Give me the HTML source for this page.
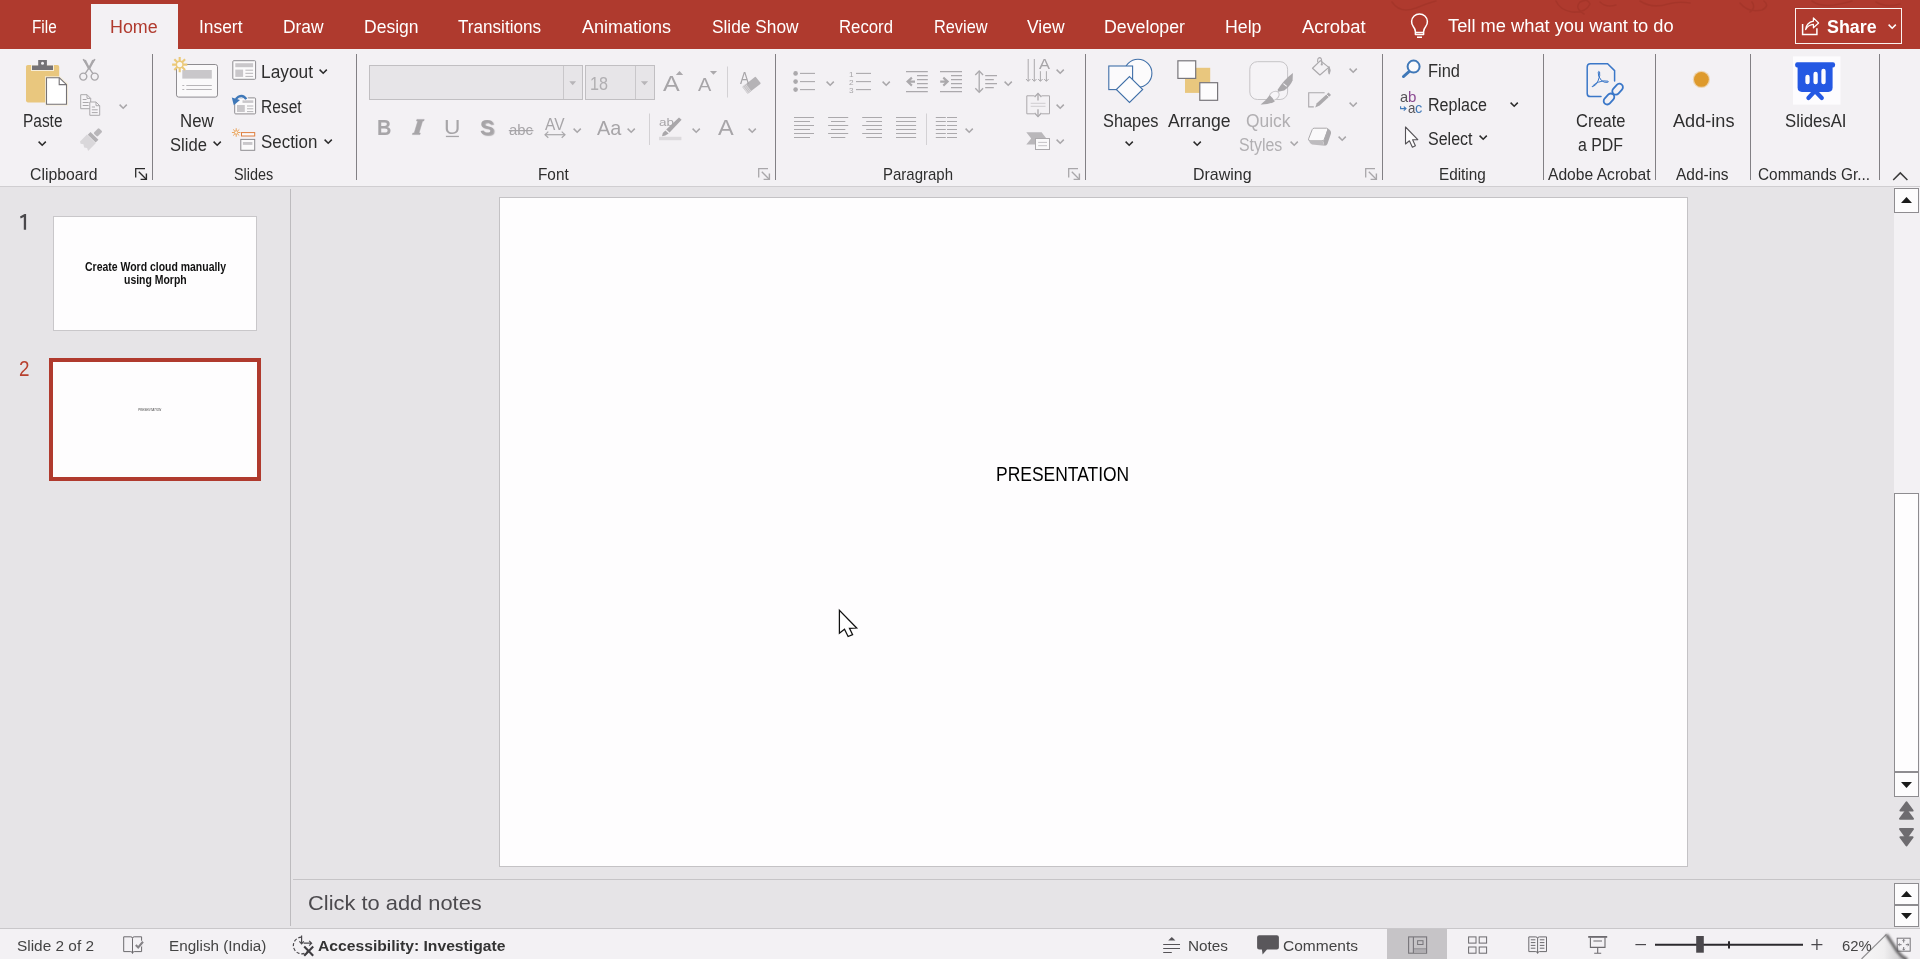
<!DOCTYPE html>
<html lang="en"><head><meta charset="utf-8"><title>PowerPoint</title>
<style>
html,body{margin:0;padding:0;width:1920px;height:959px;overflow:hidden;background:#E6E4E7;font-family:"Liberation Sans",sans-serif;}
.a{position:absolute}
.t{position:absolute;white-space:nowrap;line-height:1;transform-origin:0 0;display:inline-block}
svg{position:absolute;overflow:visible}
.sep{position:absolute;width:1px;background:#828084;top:54px;height:126px}

</style></head>
<body>
<!-- base.html -->
<!-- title/tab bar -->
<div class="a" style="left:0;top:0;width:1920px;height:49px;background:#AF3A2E"></div>
<!-- faint office background doodle -->
<svg style="left:1380px;top:0" width="540" height="20" viewBox="1380 0 540 20" fill="none" stroke="#9C3226" stroke-width="1.6" stroke-linecap="round" opacity=".5">
<path d="M1392 2 Q1400 14 1416 8 Q1428 3 1436 1"/>
<path d="M1556 1 Q1560 10 1572 12 Q1586 13 1590 4 Q1588 -2 1580 2 Q1574 8 1584 14"/>
<path d="M1600 2 Q1606 8 1616 5 M1640 1 Q1652 9 1668 4 Q1678 1 1690 3"/>
<path d="M1740 3 Q1748 13 1762 10 Q1770 6 1764 1 M1752 2 Q1756 8 1750 12"/>
<path d="M1812 1 Q1820 7 1834 5 Q1846 3 1852 1 M1876 2 Q1886 8 1900 4"/>
</svg>
<!-- ribbon body -->
<div class="a" style="left:0;top:49px;width:1920px;height:137px;background:#F3F1F4"></div>
<div class="a" style="left:0;top:186px;width:1920px;height:1px;background:#D0CED1"></div>
<!-- home tab -->
<div class="a" style="left:91px;top:4px;width:87px;height:46px;background:#F3F1F4"></div>
<!-- share button -->
<div class="a" style="left:1795px;top:8px;width:105px;height:34px;border:1px solid #FBF3F1"></div>
<!-- group separators -->
<div class="sep" style="left:152px"></div>
<div class="sep" style="left:356px"></div>
<div class="sep" style="left:775px"></div>
<div class="sep" style="left:1085px"></div>
<div class="sep" style="left:1382px"></div>
<div class="sep" style="left:1543px"></div>
<div class="sep" style="left:1655px"></div>
<div class="sep" style="left:1750px"></div>
<div class="sep" style="left:1879px"></div>

<!-- ribbon1.html -->
<svg style="left:0;top:0" width="360" height="190" viewBox="0 0 360 190" fill="none">
<!-- PASTE icon -->
<rect x="26" y="65" width="33.2" height="37.4" rx="1.8" fill="#E9C77E"/>
<rect x="31" y="65" width="23" height="6" fill="#F6EDD9"/>
<path d="M38.2 60 H46.9 V65.4 H53 V69.9 H32 V65.4 H38.2 Z" fill="#747276"/>
<circle cx="42.5" cy="63.2" r="1.5" fill="#F3F1F4"/>
<path d="M45 76.2 H60 L68 83.5 V105.7 H45 Z" fill="#F6EDD9" opacity=".9"/>
<path d="M46.5 77.7 H59.2 L66.5 84.6 V104.2 H46.5 Z" fill="#FFFFFF" stroke="#747276" stroke-width="1.1" stroke-linejoin="round"/>
<path d="M59.2 77.7 V84.6 H66.5" stroke="#747276" stroke-width="1.1"/>
<!-- CUT (disabled) -->
<g stroke="#A9A7AA" stroke-width="1.4" stroke-linecap="round">
<path d="M83.4 59.6 L92.6 73.2"/>
<path d="M94.7 59.6 L85.5 73.2"/>
<circle cx="83.3" cy="76.6" r="3.5"/>
<circle cx="94.7" cy="76.6" r="3.5"/>
</g>
<path d="M83 59.3 L86 60 L90.2 68.5 L88.2 69.5 Z" fill="#A9A7AA"/>
<path d="M95.1 59.3 L92.1 60 L87.9 68.5 L89.9 69.5 Z" fill="#A9A7AA"/>
<!-- COPY (disabled) -->
<g stroke="#ABA9AC" stroke-width="1">
<path d="M80.7 94.7 H87 L90.7 98.4 V108.7 H80.7 Z" fill="#F6F4F7"/>
<path d="M87 94.7 V98.4 H90.7"/>
<path d="M82.7 99.5 H86.5 M82.7 102.5 H88.7 M82.7 105.5 H88.7"/>
<path d="M89.8 102 H96 L99.7 105.7 V115.3 H89.8 Z" fill="#F6F4F7"/>
<path d="M96 102 V105.7 H99.7"/>
<path d="M91.8 107 H95 M91.8 109.8 H97.7 M91.8 112.6 H97.7"/>
</g>
<!-- FORMAT PAINTER (disabled) -->
<g transform="translate(90.5 139.8) rotate(45)">
<rect x="-2.7" y="-14.2" width="5.4" height="7.4" rx="1.2" fill="#B9B7BA"/>
<rect x="-5.6" y="-5.6" width="11.2" height="3.9" fill="#B3B1B4"/>
<path d="M-6.2 -1.2 H6.2 V9.6 L3.4 8.2 L0.9 9.9 L-1.8 8.2 L-4.2 9.8 L-6.2 8.6 Z" fill="#D9D7DA"/>
</g>
<!-- NEW SLIDE icon -->
<rect x="176.5" y="64.5" width="41" height="32.6" rx="2.2" fill="#FAF9FA" stroke="#8E8C90" stroke-width="1"/>
<rect x="182.3" y="70" width="29.5" height="8.6" fill="#C9C7CA"/>
<path d="M186.3 85.5 H211.8 M186.3 89.5 H211.8" stroke="#B7B5B8" stroke-width="1"/>
<path d="M182.3 85.5 H184.3 M182.3 89.5 H184.3" stroke="#B7B5B8" stroke-width="1"/>
<g stroke="#EBC978" stroke-width="2.1" stroke-linecap="butt">
<path d="M179.7 57 V72.2 M172.1 64.6 H187.3 M174.3 59.2 L185.1 70 M185.1 59.2 L174.3 70"/>
</g>
<circle cx="179.7" cy="64.6" r="3.3" fill="#FBF8F0" stroke="#EBC978" stroke-width="1.4"/>
<!-- LAYOUT icon -->
<rect x="232.8" y="60.7" width="22.8" height="18.6" rx="1" fill="#FBFAFB" stroke="#8E8C90" stroke-width="1"/>
<rect x="235.3" y="63.2" width="17.8" height="4" fill="#C9C7CA"/>
<rect x="235.3" y="69.6" width="7.8" height="7.3" fill="#C9C7CA"/>
<path d="M245.4 70.2 H253.1 M245.4 73.3 H253.1 M245.4 76.4 H253.1" stroke="#B7B5B8" stroke-width="1"/>
<!-- RESET icon -->
<rect x="234.7" y="97.9" width="20.9" height="16" rx="1" fill="#FBFAFB" stroke="#8E8C90" stroke-width="1"/>
<rect x="242.5" y="100.3" width="10.8" height="2.6" fill="#C9C7CA"/>
<rect x="237" y="105" width="7.8" height="7" fill="#C9C7CA"/>
<path d="M247 106 H253.3 M247 108.8 H253.3 M247 111.6 H253.3" stroke="#B7B5B8" stroke-width="1"/>
<path d="M246.5 99.5 Q243.5 94.2 238.2 96.6 Q235.6 98 235.2 101" stroke="#F3F1F4" stroke-width="4.5"/>
<path d="M246.3 99.2 Q243.3 94.4 238.4 96.8 Q236 98.2 235.6 100.6" stroke="#3F78B8" stroke-width="2.3"/>
<path d="M231.8 97.6 L240 100 L233.8 105.2 Z" fill="#3F78B8"/>
<!-- SECTION icon -->
<g stroke="#E9A55F" stroke-width="1" stroke-linecap="round">
<path d="M236.2 128.6 V136.4 M232.3 132.5 H240.1 M233.4 129.7 L239 135.3 M239 129.7 L233.4 135.3"/>
</g>
<circle cx="236.2" cy="132.5" r="1.7" fill="#FBF6EC" stroke="#E9A55F" stroke-width=".9"/>
<rect x="241.5" y="132.6" width="13.2" height="3.4" fill="#FBFAFB" stroke="#DE7F3E" stroke-width="1"/>
<rect x="240.8" y="139.4" width="13.9" height="10.9" fill="#FBFAFB" stroke="#8E8C90" stroke-width="1"/>
<rect x="242.9" y="142" width="9.5" height="2.9" fill="#C9C7CA"/>
</svg>

<!-- ribbon2.html -->
<svg style="left:360px;top:50px" width="420" height="140" viewBox="360 50 420 140" fill="none">
<!-- font name box -->
<rect x="369.5" y="65.5" width="213" height="34" fill="#E7E5E8" stroke="#C1BFC2" stroke-width="1"/>
<path d="M563.5 66 V99" stroke="#C9C7CA" stroke-width="1"/>
<path d="M569.3 81.2 H576.1 L572.7 85.2 Z" fill="#B7B5B8"/>
<!-- font size box -->
<rect x="585.5" y="65.5" width="69" height="34" fill="#E7E5E8" stroke="#C1BFC2" stroke-width="1"/>
<path d="M635.5 66 V99" stroke="#C9C7CA" stroke-width="1"/>
<path d="M640.9 81.2 H648.1 L644.5 85.2 Z" fill="#B7B5B8"/>
<!-- grow / shrink markers -->
<path d="M675.8 75 L679.5 71 L683.2 75 Z" fill="#ABA9AC"/>
<path d="M709.9 71 H717.1 L713.5 74.8 Z" fill="#ABA9AC"/>
<!-- thin separators -->
<path d="M727.5 66.5 V97.5" stroke="#D3D1D4" stroke-width="1"/>
<path d="M649.5 113.5 V145" stroke="#D3D1D4" stroke-width="1"/>
<!-- clear formatting eraser -->
<g transform="translate(751.6 85.2) rotate(-38)">
<rect x="-8.4" y="-4.4" width="16.8" height="8.8" rx=".8" fill="#B5B3B6"/>
<rect x="-8.4" y="-4.4" width="4.6" height="8.8" fill="#D9D7DA"/>
<path d="M-6.6 -4.4 V4.4 M-5 -4.4 V4.4" stroke="#B5B3B6" stroke-width=".6"/>
</g>
<!-- italic I -->
<path d="M419.2 119.4 H424.2 L423.8 121 H422.6 L419 133 H420.3 L419.9 134.6 H412.4 L412.8 133 H414.2 L417.8 121 H416.5 L416.9 119.4 Z" fill="#A7A5A8" stroke="#A7A5A8" stroke-width=".5"/>
<!-- underline of U -->
<rect x="445.9" y="135.8" width="13" height="1.3" fill="#A7A5A8"/>
<!-- strike of abc -->
<rect x="508.8" y="130" width="24.6" height="1.2" fill="#A7A5A8"/>
<!-- AV spacing arrow -->
<path d="M545.3 134.7 H564.7" stroke="#A9A7AA" stroke-width="1.2"/>
<path d="M548.3 131.6 L545 134.7 L548.3 137.8 M561.7 131.6 L565 134.7 L561.7 137.8" stroke="#A9A7AA" stroke-width="1.2"/>
<!-- highlighter pen -->
<path d="M679 117.6 L681.6 119.8 L669.6 132.4 L666.2 129.6 Z" fill="#A9A7AA"/>
<path d="M665.4 130.6 L668.7 133.4 L665.3 135.6 L662 136.2 L662.8 133 Z" fill="#A9A7AA"/>
<rect x="659" y="136.8" width="22.4" height="3.4" fill="#DCDADD"/>
</svg>

<!-- ribbon3.html -->
<svg style="left:780px;top:50px" width="310" height="140" viewBox="780 50 310 140" fill="none">
<circle cx="795.6" cy="73.4" r="2.3" fill="#ABA9AC"/>
<path d="M800 73.4 H815" stroke="#ABA9AC" stroke-width="1.1"/>
<circle cx="795.6" cy="81.6" r="2.3" fill="#ABA9AC"/>
<path d="M800 81.6 H815" stroke="#ABA9AC" stroke-width="1.1"/>
<circle cx="795.6" cy="89.6" r="2.3" fill="#ABA9AC"/>
<path d="M800 89.6 H815" stroke="#ABA9AC" stroke-width="1.1"/>
<path d="M856 73.4 H871" stroke="#ABA9AC" stroke-width="1.1"/>
<path d="M856 81.6 H871" stroke="#ABA9AC" stroke-width="1.1"/>
<path d="M856 89.6 H871" stroke="#ABA9AC" stroke-width="1.1"/>
<path d="M906 71.6 H927.8 M906 91.6 H927.8 M917 75.6 H927.8 M917 79.6 H927.8 M917 83.6 H927.8 M917 87.6 H927.8" stroke="#ABA9AC" stroke-width="1.1"/>
<path d="M906 81.6 L911.2 76.8 L912.6 78.4 L910.4 80.5 H915 V82.7 H910.4 L912.6 84.8 L911.2 86.4 Z" fill="#ABA9AC"/>
<path d="M940 71.6 H962 M940 91.6 H962 M951 75.6 H962 M951 79.6 H962 M951 83.6 H962 M951 87.6 H962" stroke="#ABA9AC" stroke-width="1.1"/>
<path d="M949.2 81.6 L944 76.8 L942.6 78.4 L944.8 80.5 H940.2 V82.7 H944.8 L942.6 84.8 L944 86.4 Z" fill="#ABA9AC"/>
<path d="M979.2 71.5 V91.8" stroke="#ABA9AC" stroke-width="1.3"/>
<path d="M975.3 75 L979.2 71 L983.1 75 M975.3 88.3 L979.2 92.3 L983.1 88.3" stroke="#ABA9AC" stroke-width="1.3"/>
<path d="M985.2 75.6 H997 M985.2 79.6 H993.8 M985.2 83.6 H997 M985.2 87.6 H993.8" stroke="#ABA9AC" stroke-width="1.1"/>
<path d="M794 117.5 H814 M794 121.5 H810 M794 125.5 H814 M794 129.5 H810 M794 133.5 H814 M794 137.5 H810" stroke="#ABA9AC" stroke-width="1.1"/>
<path d="M828.1 117.5 H848.2 M831 121.5 H845.3 M828.1 125.5 H848.2 M831 129.5 H845.3 M828.1 133.5 H848.2 M831 137.5 H845.3" stroke="#ABA9AC" stroke-width="1.1"/>
<path d="M862.2 117.5 H882 M866.2 121.5 H882 M862.2 125.5 H882 M866.2 129.5 H882 M862.2 133.5 H882 M866.2 137.5 H882" stroke="#ABA9AC" stroke-width="1.1"/>
<path d="M896 117.5 H916.1 M896 121.5 H916.1 M896 125.5 H916.1 M896 129.5 H916.1 M896 133.5 H916.1 M896 137.5 H916.1" stroke="#ABA9AC" stroke-width="1.1"/>
<path d="M935.8 117.5 H945.8 M935.8 121.5 H945.8 M935.8 125.5 H945.8 M935.8 129.5 H945.8 M935.8 133.5 H945.8 M935.8 137.5 H945.8" stroke="#ABA9AC" stroke-width="1.1"/>
<path d="M947 117.5 H957 M947 121.5 H957 M947 125.5 H957 M947 129.5 H957 M947 133.5 H957 M947 137.5 H957" stroke="#ABA9AC" stroke-width="1.1"/>
<path d="M926.5 113.5 V145" stroke="#D3D1D4" stroke-width="1"/>
<path d="M1028.2 59 V81 M1034.3 59 V81 M1040.4 71.2 V81 M1046.4 71.2 V81" stroke="#ABA9AC" stroke-width="1"/>
<path d="M1026.0 79 L1028.2 81.4 L1030.4 79" stroke="#ABA9AC" stroke-width="1"/>
<path d="M1032.1 79 L1034.3 81.4 L1036.5 79" stroke="#ABA9AC" stroke-width="1"/>
<path d="M1038.2 79 L1040.4 81.4 L1042.6000000000001 79" stroke="#ABA9AC" stroke-width="1"/>
<path d="M1044.2 79 L1046.4 81.4 L1048.6000000000001 79" stroke="#ABA9AC" stroke-width="1"/>
<path d="M1034.5 95.8 H1026.8 V113.8 H1034.5 M1041.5 95.8 H1049.5 V113.8 H1041.5" stroke="#ABA9AC" stroke-width="1"/>
<path d="M1038 93.4 V100.4 M1038 109.2 V116.6" stroke="#ABA9AC" stroke-width="1.3"/>
<path d="M1034.6 97 L1038 93.4 L1041.4 97 M1034.6 113 L1038 116.6 L1041.4 113" stroke="#ABA9AC" stroke-width="1.3"/>
<path d="M1030.7 103.3 H1045.5 M1030.7 106.3 H1045.5" stroke="#CFCDD0" stroke-width="1"/>
<path d="M1026.3 132.2 H1041.6 L1046.4 138.4 L1041.6 144.6 H1026.3 L1031.2 138.4 Z" fill="#B9B7BA"/>
<rect x="1035.5" y="138.5" width="14" height="11" fill="#FAF9FA" stroke="#ABA9AC" stroke-width="1"/>
<path d="M1038.2 142.4 H1047 M1038.2 145.7 H1047" stroke="#C4C2C5" stroke-width="1"/>
</svg>

<!-- ribbon4.html -->
<svg style="left:1090px;top:0" width="830" height="190" viewBox="1090 0 830 190" fill="none">
<!-- SHAPES icon -->
<circle cx="1138" cy="73.2" r="13.9" fill="#FCFBFC" stroke="#3F6FA8" stroke-width="1.1"/>
<rect x="1108.8" y="66" width="23.8" height="23.6" fill="#FBFAFC" stroke="#3F6FA8" stroke-width="1.1"/>
<path d="M1129.5 76.6 L1142.7 89.5 L1129.5 102.5 L1116.3 89.5 Z" fill="#FDFCFD" stroke="#3F6FA8" stroke-width="1.1"/>
<!-- ARRANGE icon -->
<rect x="1185" y="67.8" width="25.2" height="25.1" fill="#E9C77E"/>
<rect x="1177.9" y="60.8" width="17.8" height="17.6" fill="#FDFCFD" stroke="#78767A" stroke-width="1.2"/>
<rect x="1199.8" y="82.7" width="17.8" height="17.6" fill="#FDFCFD" stroke="#78767A" stroke-width="1.2"/>
<!-- QUICK STYLES icon (disabled) -->
<rect x="1249.8" y="61.7" width="37.8" height="37.8" rx="7.5" fill="#F5F3F6" stroke="#C6C4C7" stroke-width="1"/>
<path d="M1292.9 72.9 L1292.6 80.5 Q1290 86.5 1284.2 90.6 L1278.2 91.8 L1277.6 89.8 Q1283.5 80 1292.9 72.9 Z" fill="#ABA9AC"/>
<path d="M1283.4 83.6 L1286.8 86.4" stroke="#F5F3F6" stroke-width="1.1"/>
<ellipse cx="1274.2" cy="95.8" rx="5.4" ry="4" transform="rotate(-38 1274.2 95.8)" fill="#F7F5F8" stroke="#C9C7CA" stroke-width="1"/>
<path d="M1269.6 95.2 Q1273.4 98.2 1274.8 101.4 Q1268.8 104.8 1260.6 104.5 Q1266 100.6 1269.6 95.2 Z" fill="#ABA9AC"/>
<!-- SHAPE FILL (disabled) -->
<path d="M1320.4 60.6 L1328.8 67.4 L1319.9 75 L1312.5 68.3 Z" stroke="#ABA9AC" stroke-width="1.2" stroke-linejoin="round"/>
<path d="M1317.7 62.4 Q1317.2 57.6 1319.8 57.6 Q1322 57.8 1321.8 64" stroke="#ABA9AC" stroke-width="1.1"/>
<circle cx="1321.8" cy="64.4" r="1.1" fill="#ABA9AC"/>
<path d="M1329 66.4 Q1331.4 70.6 1329.2 74.2 Q1327.4 71.4 1329 66.4 Z" fill="#ABA9AC" stroke="#ABA9AC" stroke-width=".8"/>
<!-- SHAPE OUTLINE (disabled) -->
<path d="M1324.6 92.8 H1308.7 V106.9 H1313.8" stroke="#ABA9AC" stroke-width="1.1"/>
<path d="M1328.6 92.6 L1331 95 L1319.6 105.6 L1315.2 107.4 L1316.8 103.2 Z" fill="#ABA9AC"/>
<path d="M1326.2 94.2 L1328.8 96.8" stroke="#F3F1F4" stroke-width=".9"/>
<!-- SHAPE EFFECTS (disabled) -->
<path d="M1314.2 128.2 H1326.6 Q1328.4 128.4 1327.8 130 L1324.2 139.4 Q1323.6 140.8 1322 140.8 H1310 Q1308 140.6 1308.6 138.8 L1312.2 129.6 Q1312.8 128.2 1314.2 128.2 Z" fill="#FAF9FA" stroke="#ABA9AC" stroke-width="1"/>
<path d="M1327.6 128.6 Q1331.6 130.4 1331 133.6 L1327.4 144 Q1326.6 146 1324.4 145.8 L1323 140.8 Q1324 140.2 1324.4 139.2 Z" fill="#ABA9AC"/>
<path d="M1308.6 140 Q1309.6 143.6 1312 144.4 L1324.4 145.8 L1322.6 141 H1310.2 Z" fill="#BDBBBE"/>
<!-- FIND -->
<circle cx="1413.6" cy="66.6" r="6" fill="#FAFAFC" stroke="#3F78B8" stroke-width="2"/>
<path d="M1409 71.6 L1403.4 76.6" stroke="#3F78B8" stroke-width="2.8" stroke-linecap="round"/>
<!-- REPLACE arrow -->
<path d="M1400.6 106.2 V108.6 H1405.6" stroke="#3F78B8" stroke-width="1.1"/>
<path d="M1403.8 106.6 L1406 108.6 L1403.8 110.6" stroke="#3F78B8" stroke-width="1.1"/>
<!-- SELECT cursor -->
<path d="M1405.5 127 V144 L1409.4 140.8 L1412.4 147.2 L1415.4 145.8 L1412.6 139.8 L1417.8 139.6 Z" fill="#FDFCFD" stroke="#555357" stroke-width="1.1" stroke-linejoin="round"/>
<!-- CREATE PDF -->
<path d="M1601 96.6 H1590.4 Q1587.2 96.6 1587.2 93.4 V67 Q1587.2 63.8 1590.4 63.8 H1607.6 L1614.6 70.6 V81" stroke="#3A77C8" stroke-width="1.5" stroke-linecap="round"/>
<path d="M1592.2 86.8 Q1595.6 86.4 1598 81 Q1600.6 75 1599.6 72 Q1598.8 70.6 1598.2 72 Q1597.6 76 1601.2 80.2 Q1604 83 1607.6 82.4 Q1609 82 1608 81.2 Q1603.6 80 1598.4 82.2 Q1594.4 84 1592.6 86 Q1592 87 1592.2 86.8 Z" stroke="#3A77C8" stroke-width="1"/>
<g stroke="#3A77C8" stroke-width="1.8">
<rect x="-6.2" y="-3.5" width="12.4" height="7" rx="3.5" transform="translate(1617.6 89.2) rotate(-48)"/>
<rect x="-6.2" y="-3.5" width="12.4" height="7" rx="3.5" transform="translate(1609 99) rotate(-48)"/>
</g>
<!-- ADD-INS dot -->
<circle cx="1701.4" cy="79.4" r="8.6" fill="#E7B25A" opacity=".45"/>
<circle cx="1701.4" cy="79.4" r="7.4" fill="#DE9A2C"/>
<!-- SLIDES AI -->
<rect x="1793" y="56.4" width="47.5" height="48.2" fill="#FDFCFE"/>
<rect x="1795.2" y="62.2" width="39.8" height="5.2" rx="2" fill="#2458E3"/>
<path d="M1797.6 66 H1832.6 V87.6 Q1832.6 91.9 1828.3 91.9 H1801.9 Q1797.6 91.9 1797.6 87.6 Z" fill="#2458E3"/>
<path d="M1814.9 91 L1808.4 98 M1815.1 91 L1821.8 98" stroke="#2458E3" stroke-width="4.2" stroke-linecap="round"/>
<g stroke="#FDFCFE" stroke-width="4.3" stroke-linecap="round">
<path d="M1807.5 77 V82.2 M1815.6 74 V82.2 M1823.5 71 V82.2"/>
</g>
<!-- collapse ribbon chevron -->
<path d="M1893.2 180 L1900.3 172.9 L1907.4 180" stroke="#3A3A3A" stroke-width="1.5"/>
<!-- lightbulb -->
<path d="M1415.4 34.6 V31.6 Q1415.2 29 1413.4 26.8 A7.9 7.9 0 1 1 1425.6 26.8 Q1423.8 29 1423.6 31.6 V34.6 Z" stroke="#FFFFFF" stroke-width="1.5" stroke-linejoin="round"/>
<path d="M1415.6 32.5 H1423.4 M1417 37.2 H1422" stroke="#FFFFFF" stroke-width="1.5"/>
<!-- share icon -->
<path d="M1802.6 24 V34.4 H1816.9 V28.2" stroke="#FFFFFF" stroke-width="1.5"/>
<path d="M1805.6 29.6 Q1806.4 22.6 1813.4 21.2 V17.8 L1818.6 23 L1813.4 27.8 V24.4 Q1808.4 24.6 1805.6 29.6 Z" stroke="#FFFFFF" stroke-width="1.2" stroke-linejoin="round"/>
</svg>

<!-- panels.html -->
<!-- thumbnail pane divider -->
<div class="a" style="left:290px;top:189px;width:1px;height:737px;background:#BDBBBE"></div>
<!-- thumb number 1 -->
<svg style="left:18px;top:212px" width="12" height="20" viewBox="18 212 12 20"><path d="M26.1 214 V229.8 H23.8 V216.9 L20.7 218.4 L20 216.5 L24.5 214 Z" fill="#4A484C"/></svg>
<!-- thumb 1 -->
<div class="a" style="left:53px;top:216px;width:202px;height:113px;background:#FEFDFE;border:1px solid #C9C7CA"></div>
<!-- thumb 2 (selected) -->
<div class="a" style="left:49px;top:358px;width:204px;height:115px;background:#FEFDFE;border:4px solid #B03A2E"></div>
<span class="t" style="left:138px;top:407.6px;font-size:10px;color:#4a4a4a;font-style:italic;transform:scale(0.305,0.36)">PRESENTATION</span>
<!-- slide -->
<div class="a" style="left:499px;top:197px;width:1187px;height:668px;background:#FEFDFE;border:1px solid #C4C2C5"></div>
<!-- notes divider -->
<div class="a" style="left:293px;top:879px;width:1627px;height:1px;background:#C6C4C7"></div>
<!-- vertical scrollbar -->
<div class="a" style="left:1894px;top:187px;width:26px;height:610px;background:#F3F1F4"></div>
<div class="a" style="left:1894px;top:188px;width:23px;height:23px;background:#FDFCFD;border:1px solid #8E8C90"></div>
<svg style="left:1901px;top:197px" width="11" height="6"><path d="M0 6 L5.5 0 L11 6Z" fill="#1a1a1a"/></svg>
<div class="a" style="left:1894px;top:493px;width:23px;height:277px;background:#FEFDFE;border:1px solid #8E8C90"></div>
<div class="a" style="left:1894px;top:772px;width:23px;height:23px;background:#FDFCFD;border:1px solid #8E8C90"></div>
<svg style="left:1901px;top:782px" width="11" height="6"><path d="M0 0 L11 0 L5.5 6Z" fill="#1a1a1a"/></svg>
<!-- prev / next slide -->
<svg style="left:1896px;top:798px" width="22" height="52" viewBox="1896 798 22 52">
<g fill="#6E6C70" stroke="#6E6C70" stroke-width="2" stroke-linejoin="round">
<path d="M1906.5 802.4 L1912.6 810.6 H1900.4 Z"/><path d="M1906.5 810 L1913 818.8 H1900 Z"/>
<path d="M1906.5 845.4 L1912.6 837.2 H1900.4 Z"/><path d="M1906.5 837.8 L1913 829 H1900 Z"/>
</g></svg>
<!-- notes scroll buttons -->
<div class="a" style="left:1894px;top:883px;width:23px;height:20px;background:#FDFCFD;border:1px solid #8E8C90"></div>
<svg style="left:1901px;top:891px" width="11" height="6"><path d="M0 6 L5.5 0 L11 6Z" fill="#1a1a1a"/></svg>
<div class="a" style="left:1894px;top:905px;width:23px;height:20px;background:#FDFCFD;border:1px solid #8E8C90"></div>
<svg style="left:1901px;top:913px" width="11" height="6"><path d="M0 0 L11 0 L5.5 6Z" fill="#1a1a1a"/></svg>
<!-- mouse cursor -->
<svg style="left:830px;top:600px" width="40" height="45" viewBox="830 600 40 45" fill="none"><path d="M839.4 610.3 V633.3 L844.5 629.2 L848.1 636.5 L852.6 634.6 L849.5 628.4 L856.7 628 Z" fill="#FFFFFF" stroke="#111111" stroke-width="1.25" stroke-linejoin="miter"/></svg>

<!-- status.html -->
<!-- status bar -->
<div class="a" style="left:0;top:928px;width:1920px;height:1px;background:#C9C7CA"></div>
<div class="a" style="left:0;top:929px;width:1920px;height:30px;background:#F3F1F4"></div>
<!-- normal view highlighted -->
<div class="a" style="left:1387px;top:929px;width:60px;height:30px;background:#C6C4C7"></div>
<svg style="left:0;top:925px" width="1920" height="34" viewBox="0 925 1920 34" fill="none">
<defs>
<linearGradient id="curl" x1="0" y1="0" x2="1" y2="0">
<stop offset="0" stop-color="#F6F5F6"/><stop offset=".5" stop-color="#F0EFF0"/><stop offset=".8" stop-color="#D6D5D7"/><stop offset="1" stop-color="#A9A8AA"/>
</linearGradient>
<filter id="bl" x="-20%" y="-20%" width="140%" height="140%"><feGaussianBlur stdDeviation=".9"/></filter>
</defs>
<!-- spell check book -->
<path d="M132.5 938.4 V953.4 M123.7 936.8 H130.8 Q132.5 936.8 132.5 938.4 Q132.5 936.8 134.2 936.8 H141.6 V951.6 H134.2 Q132.5 951.8 132.5 953.4 Q132.5 951.8 130.8 951.6 H123.7 Z" stroke="#6C6A6E" stroke-width="1"/>
<path d="M135.8 945 L138.2 947.4 L143 941.8" stroke="#F3F1F4" stroke-width="4"/>
<path d="M135.8 945 L138.2 947.4 L143 941.8" stroke="#858387" stroke-width="2.1"/>
<!-- accessibility -->
<path d="M301.4 937.2 A8.3 8.3 0 1 0 309 949.4" stroke="#4A484C" stroke-width="1.2" stroke-dasharray="3.2 1.8"/>
<path d="M301.6 935.4 V943.6 M299.4 941.4 L301.6 943.8 L303.8 941.4" stroke="#4A484C" stroke-width="1.2"/>
<path d="M303.6 943.2 H311.4 M309.2 940.8 L311.6 943.2 L309.2 945.6" stroke="#4A484C" stroke-width="1.2"/>
<path d="M304.2 946.6 L313.2 955.8 M313.2 946.6 L304.2 955.8" stroke="#3E3C40" stroke-width="2.1"/>
<!-- notes icon -->
<path d="M1168.2 940.6 L1171.8 936.9 L1175.4 940.6 Z" fill="#555357"/>
<path d="M1163.2 944.5 H1180 M1163.2 948.5 H1180 M1163.2 952.5 H1171.8" stroke="#555357" stroke-width="1.1"/>
<!-- comments icon -->
<path d="M1259.2 935.2 H1276.8 Q1278.9 935.2 1278.9 937.3 V947.5 Q1278.9 949.6 1276.8 949.6 H1267 L1262.6 954.4 L1261.9 949.6 H1259.2 Q1257.1 949.6 1257.1 947.5 V937.3 Q1257.1 935.2 1259.2 935.2 Z" fill="#59575B"/>
<!-- normal view -->
<rect x="1408.6" y="936.9" width="18" height="16.3" stroke="#77757A" stroke-width="1.1"/>
<path d="M1413.4 937 V953 M1413.4 949 H1426.6" stroke="#77757A" stroke-width="1.1"/>
<rect x="1414" y="949.5" width="12" height="3.2" fill="#AFADB1"/>
<rect x="1417.6" y="940.7" width="5.4" height="3.8" stroke="#77757A" stroke-width="1"/>
<!-- slide sorter -->
<g stroke="#6C6A6E" stroke-width="1">
<rect x="1468.6" y="936.9" width="7.4" height="6.2"/><rect x="1479.2" y="936.9" width="7.4" height="6.2"/>
<rect x="1468.6" y="947" width="7.4" height="6.2"/><rect x="1479.2" y="947" width="7.4" height="6.2"/>
</g>
<!-- reading view -->
<g stroke="#6C6A6E" stroke-width="1">
<path d="M1537.6 938.6 V953.2 M1528.8 936.9 H1535.8 Q1537.6 936.9 1537.6 938.6 Q1537.6 936.9 1539.4 936.9 H1546.5 V951.6 H1539.4 Q1537.6 951.8 1537.6 953.4 Q1537.6 951.8 1535.8 951.6 H1528.8 Z"/>
<path d="M1530.8 939.8 H1535.4 M1530.8 942.6 H1535.4 M1530.8 945.4 H1535.4 M1530.8 948.2 H1535.4 M1539.8 939.8 H1544.4 M1539.8 942.6 H1544.4 M1539.8 945.4 H1544.4 M1539.8 948.2 H1544.4"/>
</g>
<!-- slide show -->
<path d="M1588.2 936.9 H1607.2" stroke="#6C6A6E" stroke-width="1.8"/>
<path d="M1590.4 937.4 V947.4 H1605 V937.4 M1593.4 941 H1602 M1597.7 947.4 V953 M1594.2 953.2 H1601.2" stroke="#6C6A6E" stroke-width="1.1"/>
<!-- zoom -->
<path d="M1635.4 944.6 H1646" stroke="#4A484C" stroke-width="1.2"/>
<path d="M1655 944.7 H1803" stroke="#2B292D" stroke-width="2"/>
<rect x="1696.2" y="936" width="7.6" height="16.7" fill="#4A484C"/>
<path d="M1729 941.2 V948.6" stroke="#2B292D" stroke-width="2"/>
<path d="M1811.4 944.6 H1822.4 M1816.9 939.1 V950.1" stroke="#4A484C" stroke-width="1.3"/>
<!-- fit slide icon -->
<rect x="1897.2" y="938.2" width="13" height="13" stroke="#77757A" stroke-width="1"/>
<path d="M1903.7 939.4 V942.6 M1903.7 947 V950.2 M1898.4 944.7 H1901.6 M1905.8 944.7 H1909" stroke="#77757A" stroke-width="1"/>
<path d="M1902.4 940.8 L1903.7 939.4 L1905 940.8 M1902.4 948.8 L1903.7 950.2 L1905 948.8 M1899.8 943.4 L1898.4 944.7 L1899.8 946 M1907.6 943.4 L1909 944.7 L1907.6 946" stroke="#77757A" stroke-width=".8"/>
<!-- page curl artefact -->
<path d="M1861.5 959 L1886.4 934.4 Q1892 943 1897.4 951.4 Q1901 956.4 1906.6 959 Z" fill="url(#curl)"/>
<path d="M1861.5 959 L1886.4 934.4" stroke="#8F8E90" stroke-width="1.1"/>
<g filter="url(#bl)"><path d="M1886.4 934.6 Q1892.4 943.4 1897.6 951.6 Q1901.4 956.8 1907.4 959.6" stroke="#4C4B4D" stroke-width="3.2" opacity=".8"/></g>
</svg>

<!-- chevrons/launchers -->
<svg style="left:38px;top:141.4px" width="8.4" height="5" fill="none"><path d="M0.6 0.6 L4.2 4.2 L7.8 0.6" stroke="#2b2b2b" stroke-width="1.5"/></svg>
<svg style="left:213.3px;top:141.4px" width="8.4" height="5" fill="none"><path d="M0.6 0.6 L4.2 4.2 L7.8 0.6" stroke="#2b2b2b" stroke-width="1.5"/></svg>
<svg style="left:319.3px;top:68.6px" width="8.4" height="5" fill="none"><path d="M0.6 0.6 L4.2 4.2 L7.8 0.6" stroke="#2b2b2b" stroke-width="1.5"/></svg>
<svg style="left:324.2px;top:138.6px" width="8.4" height="5" fill="none"><path d="M0.6 0.6 L4.2 4.2 L7.8 0.6" stroke="#2b2b2b" stroke-width="1.5"/></svg>
<svg style="left:1125px;top:141.2px" width="8.4" height="5" fill="none"><path d="M0.6 0.6 L4.2 4.2 L7.8 0.6" stroke="#2b2b2b" stroke-width="1.5"/></svg>
<svg style="left:1193px;top:141.2px" width="8.4" height="5" fill="none"><path d="M0.6 0.6 L4.2 4.2 L7.8 0.6" stroke="#2b2b2b" stroke-width="1.5"/></svg>
<svg style="left:1510px;top:102.2px" width="8.4" height="5" fill="none"><path d="M0.6 0.6 L4.2 4.2 L7.8 0.6" stroke="#2b2b2b" stroke-width="1.5"/></svg>
<svg style="left:1479px;top:135px" width="8.4" height="5" fill="none"><path d="M0.6 0.6 L4.2 4.2 L7.8 0.6" stroke="#2b2b2b" stroke-width="1.5"/></svg>
<svg style="left:1887.5px;top:24px" width="8.4" height="5" fill="none"><path d="M0.6 0.6 L4.2 4.2 L7.8 0.6" stroke="#ffffff" stroke-width="1.5"/></svg>
<svg style="left:119.2px;top:104.2px" width="8.4" height="5" fill="none"><path d="M0.6 0.6 L4.2 4.2 L7.8 0.6" stroke="#A9A7AA" stroke-width="1.5"/></svg>
<svg style="left:573px;top:127.6px" width="8.4" height="5" fill="none"><path d="M0.6 0.6 L4.2 4.2 L7.8 0.6" stroke="#A9A7AA" stroke-width="1.5"/></svg>
<svg style="left:627px;top:127.6px" width="8.4" height="5" fill="none"><path d="M0.6 0.6 L4.2 4.2 L7.8 0.6" stroke="#A9A7AA" stroke-width="1.5"/></svg>
<svg style="left:692px;top:127.6px" width="8.4" height="5" fill="none"><path d="M0.6 0.6 L4.2 4.2 L7.8 0.6" stroke="#A9A7AA" stroke-width="1.5"/></svg>
<svg style="left:748px;top:127.6px" width="8.4" height="5" fill="none"><path d="M0.6 0.6 L4.2 4.2 L7.8 0.6" stroke="#A9A7AA" stroke-width="1.5"/></svg>
<svg style="left:826px;top:81px" width="8.4" height="5" fill="none"><path d="M0.6 0.6 L4.2 4.2 L7.8 0.6" stroke="#A9A7AA" stroke-width="1.5"/></svg>
<svg style="left:882px;top:81px" width="8.4" height="5" fill="none"><path d="M0.6 0.6 L4.2 4.2 L7.8 0.6" stroke="#A9A7AA" stroke-width="1.5"/></svg>
<svg style="left:1004px;top:81px" width="8.4" height="5" fill="none"><path d="M0.6 0.6 L4.2 4.2 L7.8 0.6" stroke="#A9A7AA" stroke-width="1.5"/></svg>
<svg style="left:1056px;top:69.4px" width="8.4" height="5" fill="none"><path d="M0.6 0.6 L4.2 4.2 L7.8 0.6" stroke="#A9A7AA" stroke-width="1.5"/></svg>
<svg style="left:1056px;top:104.3px" width="8.4" height="5" fill="none"><path d="M0.6 0.6 L4.2 4.2 L7.8 0.6" stroke="#A9A7AA" stroke-width="1.5"/></svg>
<svg style="left:1056px;top:139.3px" width="8.4" height="5" fill="none"><path d="M0.6 0.6 L4.2 4.2 L7.8 0.6" stroke="#A9A7AA" stroke-width="1.5"/></svg>
<svg style="left:965px;top:127.6px" width="8.4" height="5" fill="none"><path d="M0.6 0.6 L4.2 4.2 L7.8 0.6" stroke="#A9A7AA" stroke-width="1.5"/></svg>
<svg style="left:1289.5px;top:141.4px" width="8.4" height="5" fill="none"><path d="M0.6 0.6 L4.2 4.2 L7.8 0.6" stroke="#A9A7AA" stroke-width="1.5"/></svg>
<svg style="left:1349px;top:68px" width="8.4" height="5" fill="none"><path d="M0.6 0.6 L4.2 4.2 L7.8 0.6" stroke="#A9A7AA" stroke-width="1.5"/></svg>
<svg style="left:1349px;top:102.3px" width="8.4" height="5" fill="none"><path d="M0.6 0.6 L4.2 4.2 L7.8 0.6" stroke="#A9A7AA" stroke-width="1.5"/></svg>
<svg style="left:1338px;top:136px" width="8.4" height="5" fill="none"><path d="M0.6 0.6 L4.2 4.2 L7.8 0.6" stroke="#A9A7AA" stroke-width="1.5"/></svg>
<svg style="left:135px;top:168px" width="12" height="12" fill="none"><path d="M0.7 9.5 V0.7 H10" stroke="#2b2b2b" stroke-width="1.3"/><path d="M3.8 3.8 L11 11" stroke="#2b2b2b" stroke-width="1.3"/><path d="M11.4 5.6 V11.4 H5.6" stroke="#2b2b2b" stroke-width="1.4"/></svg>
<svg style="left:758px;top:168px" width="12" height="12" fill="none"><path d="M0.7 9.5 V0.7 H10" stroke="#A9A7AA" stroke-width="1.3"/><path d="M3.8 3.8 L11 11" stroke="#A9A7AA" stroke-width="1.3"/><path d="M11.4 5.6 V11.4 H5.6" stroke="#A9A7AA" stroke-width="1.4"/></svg>
<svg style="left:1068px;top:168px" width="12" height="12" fill="none"><path d="M0.7 9.5 V0.7 H10" stroke="#A9A7AA" stroke-width="1.3"/><path d="M3.8 3.8 L11 11" stroke="#A9A7AA" stroke-width="1.3"/><path d="M11.4 5.6 V11.4 H5.6" stroke="#A9A7AA" stroke-width="1.4"/></svg>
<svg style="left:1365px;top:168px" width="12" height="12" fill="none"><path d="M0.7 9.5 V0.7 H10" stroke="#A9A7AA" stroke-width="1.3"/><path d="M3.8 3.8 L11 11" stroke="#A9A7AA" stroke-width="1.3"/><path d="M11.4 5.6 V11.4 H5.6" stroke="#A9A7AA" stroke-width="1.4"/></svg>
<!-- texts -->
<span class="t" style="left:32px;top:19px;font-size:17.5px;color:#ffffff;transform:scaleX(0.8758);">File</span>
<span class="t" style="left:110px;top:19px;font-size:17.5px;color:#B03A2E;transform:scaleX(1.0217);">Home</span>
<span class="t" style="left:198.5px;top:19px;font-size:17.5px;color:#ffffff;transform:scaleX(0.9936);">Insert</span>
<span class="t" style="left:282.5px;top:19px;font-size:17.5px;color:#ffffff;transform:scaleX(0.9916);">Draw</span>
<span class="t" style="left:363.5px;top:19px;font-size:17.5px;color:#ffffff;transform:scaleX(1.0003);">Design</span>
<span class="t" style="left:458px;top:19px;font-size:17.5px;color:#ffffff;transform:scaleX(0.9772);">Transitions</span>
<span class="t" style="left:581.5px;top:19px;font-size:17.5px;color:#ffffff;transform:scaleX(1.0280);">Animations</span>
<span class="t" style="left:711.5px;top:19px;font-size:17.5px;color:#ffffff;transform:scaleX(0.9879);">Slide Show</span>
<span class="t" style="left:838.5px;top:19px;font-size:17.5px;color:#ffffff;transform:scaleX(0.9571);">Record</span>
<span class="t" style="left:933.5px;top:19px;font-size:17.5px;color:#ffffff;transform:scaleX(0.9322);">Review</span>
<span class="t" style="left:1026.5px;top:19px;font-size:17.5px;color:#ffffff;transform:scaleX(0.9967);">View</span>
<span class="t" style="left:1104px;top:19px;font-size:17.5px;color:#ffffff;transform:scaleX(1.0153);">Developer</span>
<span class="t" style="left:1225px;top:19px;font-size:17.5px;color:#ffffff;transform:scaleX(1.0139);">Help</span>
<span class="t" style="left:1301.5px;top:19px;font-size:17.5px;color:#ffffff;transform:scaleX(1.0528);">Acrobat</span>
<span class="t" style="left:1448.3px;top:18px;font-size:17.5px;color:#ffffff;transform:scaleX(1.0451);">Tell me what you want to do</span>
<span class="t" style="left:1826.6px;top:18.0px;font-size:18.3px;color:#ffffff;font-weight:bold;transform:scaleX(0.9761);">Share</span>
<span class="t" style="left:23px;top:113px;font-size:17.5px;color:#2e2e2e;transform:scaleX(0.8827);">Paste</span>
<span class="t" style="left:29.5px;top:167px;font-size:15.7px;color:#2e2e2e;transform:scaleX(1.0051);">Clipboard</span>
<span class="t" style="left:180px;top:113px;font-size:17.5px;color:#2e2e2e;transform:scaleX(0.9624);">New</span>
<span class="t" style="left:170px;top:137px;font-size:17.5px;color:#2e2e2e;transform:scaleX(0.9506);">Slide</span>
<span class="t" style="left:261px;top:64px;font-size:17.5px;color:#2e2e2e;transform:scaleX(0.9896);">Layout</span>
<span class="t" style="left:261px;top:99px;font-size:17.5px;color:#2e2e2e;transform:scaleX(0.8880);">Reset</span>
<span class="t" style="left:261px;top:134px;font-size:17.5px;color:#2e2e2e;transform:scaleX(0.9662);">Section</span>
<span class="t" style="left:233.7px;top:167px;font-size:15.7px;color:#2e2e2e;transform:scaleX(0.9196);">Slides</span>
<span class="t" style="left:589.5px;top:76px;font-size:17.5px;color:#B1AFB2;transform:scaleX(0.9246);">18</span>
<span class="t" style="left:538px;top:167px;font-size:15.7px;color:#2e2e2e;transform:scaleX(0.9780);">Font</span>
<span class="t" style="left:882.5px;top:167px;font-size:15.7px;color:#2e2e2e;transform:scaleX(0.9554);">Paragraph</span>
<span class="t" style="left:1102.5px;top:113px;font-size:17.5px;color:#2e2e2e;transform:scaleX(0.9350);">Shapes</span>
<span class="t" style="left:1167.5px;top:113px;font-size:17.5px;color:#2e2e2e;transform:scaleX(1.0038);">Arrange</span>
<span class="t" style="left:1246px;top:113px;font-size:17.5px;color:#B1AFB2;transform:scaleX(0.9948);">Quick</span>
<span class="t" style="left:1238.7px;top:137px;font-size:17.5px;color:#B1AFB2;transform:scaleX(0.9086);">Styles</span>
<span class="t" style="left:1192.5px;top:167px;font-size:15.7px;color:#2e2e2e;transform:scaleX(1.0166);">Drawing</span>
<span class="t" style="left:1428px;top:63px;font-size:17.5px;color:#2e2e2e;transform:scaleX(0.9399);">Find</span>
<span class="t" style="left:1428px;top:97px;font-size:17.5px;color:#2e2e2e;transform:scaleX(0.9187);">Replace</span>
<span class="t" style="left:1428px;top:131px;font-size:17.5px;color:#2e2e2e;transform:scaleX(0.9149);">Select</span>
<span class="t" style="left:1438.7px;top:167px;font-size:15.7px;color:#2e2e2e;transform:scaleX(0.9756);">Editing</span>
<span class="t" style="left:1575.5px;top:113px;font-size:17.5px;color:#2e2e2e;transform:scaleX(0.9423);">Create</span>
<span class="t" style="left:1577.5px;top:137px;font-size:17.5px;color:#2e2e2e;transform:scaleX(0.9071);">a PDF</span>
<span class="t" style="left:1547.5px;top:167px;font-size:15.7px;color:#2e2e2e;transform:scaleX(0.9959);">Adobe Acrobat</span>
<span class="t" style="left:1672.5px;top:113px;font-size:17.5px;color:#2e2e2e;transform:scaleX(1.0363);">Add-ins</span>
<span class="t" style="left:1675.5px;top:167px;font-size:15.7px;color:#2e2e2e;transform:scaleX(0.9868);">Add-ins</span>
<span class="t" style="left:1784.5px;top:113px;font-size:17.5px;color:#2e2e2e;transform:scaleX(0.9579);">SlidesAI</span>
<span class="t" style="left:1758px;top:167px;font-size:15.7px;color:#2e2e2e;transform:scaleX(0.9807);">Commands Gr...</span>
<span class="t" style="left:18.5px;top:358px;font-size:22px;color:#B8402F;transform:scaleX(0.8571);">2</span>
<span class="t" style="left:84.7px;top:260.8px;font-size:12.3px;color:#111111;font-weight:bold;transform:scaleX(0.8509);">Create Word cloud manually</span>
<span class="t" style="left:124px;top:273.6px;font-size:12.3px;color:#111111;font-weight:bold;transform:scaleX(0.8498);">using Morph</span>
<span class="t" style="left:995.8px;top:465px;font-size:19.3px;color:#000000;transform:scaleX(0.9054);">PRESENTATION</span>
<span class="t" style="left:307.6px;top:891.8px;font-size:21px;color:#4C4A4E;transform:scaleX(1.0411);">Click to add notes</span>
<span class="t" style="left:17.3px;top:938px;font-size:15.4px;color:#444444;transform:scaleX(0.9998);">Slide 2 of 2</span>
<span class="t" style="left:169.3px;top:938px;font-size:15.4px;color:#444444;transform:scaleX(0.9899);">English (India)</span>
<span class="t" style="left:318.3px;top:938px;font-size:15.4px;color:#333333;font-weight:bold;transform:scaleX(1.0190);">Accessibility: Investigate</span>
<span class="t" style="left:1187.5px;top:938px;font-size:15.4px;color:#444444;transform:scaleX(0.9946);">Notes</span>
<span class="t" style="left:1283.3px;top:938px;font-size:15.4px;color:#444444;transform:scaleX(1.0080);">Comments</span>
<span class="t" style="left:1841.8px;top:938px;font-size:15.4px;color:#444444;transform:scaleX(0.9639);">62%</span>
<span class="t" style="left:377.4px;top:116.6px;font-size:21.2px;color:#A7A5A8;font-weight:bold;transform:scaleX(0.9404);">B</span>
<span class="t" style="left:444.2px;top:117.2px;font-size:20.5px;color:#A7A5A8;transform:scaleX(1.1072);">U</span>
<span class="t" style="left:480.2px;top:116.6px;font-size:21.2px;color:#A7A5A8;font-weight:bold;text-shadow:1.2px 1.2px 1px rgba(90,88,92,.45);transform:scaleX(1.0042);">S</span>
<span class="t" style="left:509px;top:122.6px;font-size:14.7px;color:#A7A5A8;transform:scaleX(1.0132);">abc</span>
<span class="t" style="left:545.2px;top:116px;font-size:16.3px;color:#A7A5A8;transform:scaleX(0.9505);">AV</span>
<span class="t" style="left:597.3px;top:117.6px;font-size:20.8px;color:#A7A5A8;transform:scaleX(0.9547);">Aa</span>
<span class="t" style="left:717.6px;top:115.6px;font-size:22.8px;color:#A7A5A8;transform:scaleX(1.0316);">A</span>
<span class="t" style="left:662.8px;top:71.7px;font-size:22.7px;color:#A7A5A8;transform:scaleX(1.1030);">A</span>
<span class="t" style="left:697.7px;top:75.7px;font-size:18.7px;color:#A7A5A8;transform:scaleX(1.0667);">A</span>
<span class="t" style="left:740.2px;top:70.6px;font-size:16.8px;color:#A7A5A8;transform:scaleX(0.8123);">A</span>
<span class="t" style="left:658.6px;top:116.5px;font-size:11.8px;color:#A7A5A8;transform:scaleX(1.1429);">ab</span>
<span class="t" style="left:848.8px;top:70.8px;font-size:7.4px;color:#A7A5A8;transform:scaleX(1.1152);">1</span>
<span class="t" style="left:848.8px;top:78.8px;font-size:7.4px;color:#A7A5A8;transform:scaleX(1.1152);">2</span>
<span class="t" style="left:848.8px;top:86.8px;font-size:7.4px;color:#A7A5A8;transform:scaleX(1.1152);">3</span>
<span class="t" style="left:1039.2px;top:57.3px;font-size:14.7px;color:#A7A5A8;transform:scaleX(1.1228);">A</span>
<span class="t" style="left:1399.8px;top:90.2px;font-size:14.6px;color:#555357;transform:scaleX(1.0092);">a</span>
<span class="t" style="left:1408.2px;top:90.2px;font-size:14.6px;color:#8C4A92;transform:scaleX(1.0338);">b</span>
<span class="t" style="left:1408.2px;top:100.5px;font-size:14.6px;color:#555357;transform:scaleX(0.9108);">a</span>
<span class="t" style="left:1415.4px;top:100.5px;font-size:14.6px;color:#3F78B8;transform:scaleX(1.0004);">c</span>
</body></html>
